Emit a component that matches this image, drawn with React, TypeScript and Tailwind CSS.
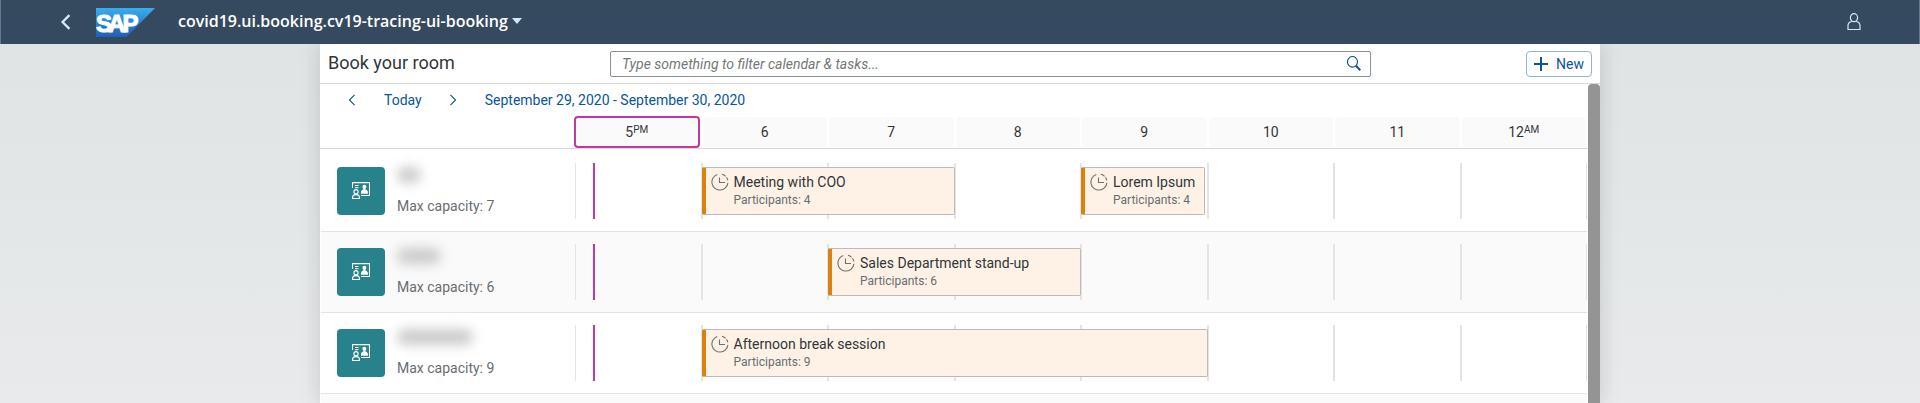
import React from "react";

type Activity = {
  title: string;
  participants: number;
  start: number;
  end: number;
};

type Room = {
  id: string;
  capacity: number;
  nameClass: string;
  activities: Activity[];
};

const HOURS: { label: string; suffix?: string; current?: boolean }[] = [
  { label: "5", suffix: "PM", current: true },
  { label: "6" },
  { label: "7" },
  { label: "8" },
  { label: "9" },
  { label: "10" },
  { label: "11" },
  { label: "12", suffix: "AM" },
];

const NOW = 0.143;

const ROOMS: Room[] = [
  {
    id: "room-1",
    capacity: 7,
    nameClass: "w-6",
    activities: [
      { title: "Meeting with COO", participants: 4, start: 1, end: 3 },
      { title: "Lorem Ipsum", participants: 4, start: 4, end: 4.98 },
    ],
  },
  {
    id: "room-2",
    capacity: 6,
    nameClass: "w-11",
    activities: [
      { title: "Sales Department stand-up", participants: 6, start: 2, end: 4 },
    ],
  },
  {
    id: "room-3",
    capacity: 9,
    nameClass: "w-19",
    activities: [
      { title: "Afternoon break session", participants: 9, start: 1, end: 5 },
    ],
  },
];

function SapLogo() {
  return (
    <svg width="59" height="29" viewBox="0 0 59 29" role="img" aria-label="SAP">
      <defs>
        <linearGradient id="sap-blue" x1="0" y1="0" x2="0" y2="1">
          <stop offset="0" stopColor="#38aeea" />
          <stop offset="0.5" stopColor="#2a86d2" />
          <stop offset="1" stopColor="#1f5fb8" />
        </linearGradient>
      </defs>
      <path d="M0 0H59L30.500 29H0Z" fill="url(#sap-blue)" />
      <text
        x="0 12 26.500"
        y="23.500"
        fill="#fff"
        stroke="#fff"
        strokeWidth="1.100"
        fontFamily="'Liberation Sans', Arial, sans-serif"
        fontWeight="700"
        fontSize="24"
      >
        SAP
      </text>
    </svg>
  );
}

function Chevron({ left, className }: { left?: boolean; className: string }) {
  return (
    <svg viewBox="0 0 8 14" fill="none" stroke="currentColor" className={className} aria-hidden="true">
      <path d={left ? "M7 1L1 7L7 13" : "M1 1L7 7L1 13"} />
    </svg>
  );
}

function RoomIcon() {
  return (
    <svg width="18" height="18" viewBox="0 0 18 18" fill="none" stroke="#fff" aria-hidden="true">
      <path d="M0.500 6V0.600H17.500V13.500H9" strokeWidth="1.100" />
      <path d="M3 3.500H6.500M3 5.700H6.500" />
      <circle cx="4" cy="9.700" r="2.100" strokeWidth="1.100" />
      <path d="M0.600 16.500V15.500C0.600 13.700 1.800 12.600 4 12.600S7.400 13.700 7.400 15.500V16.500Z" strokeWidth="1.100" />
      <g fill="#fff" stroke="none">
        <circle cx="12.400" cy="4.800" r="2" />
        <path d="M9 11.800V10.200C9 8.500 10.100 7.700 11.400 7.400V6H13.400V7.400C14.800 7.700 15.900 8.500 15.900 10.200V11.800Z" />
      </g>
    </svg>
  );
}

function ClockIcon() {
  return (
    <svg width="18" height="18" viewBox="0 0 18 18" fill="none" stroke="#75706a" strokeWidth="1.100" className="shrink-0" aria-hidden="true">
      <path d="M6.300 1.500A8 8 0 1 0 16.900 9.900" />
      <path d="M11 1.300A8 8 0 0 1 14.600 3.400" />
      <path d="M15.500 4.400A8 8 0 0 1 16.800 7.400" />
      <path d="M8.500 4.500V9.500H14" />
    </svg>
  );
}

function ActivityCard({ activity }: { activity: Activity }) {
  const left = `${(activity.start / HOURS.length) * 100}%`;
  const width = `${((activity.end - activity.start) / HOURS.length) * 100}%`;
  return (
    <button
      type="button"
      style={{ left, width }}
      className="absolute inset-y-1 flex items-start gap-[5px] overflow-hidden rounded-xs border border-l-4 border-[#bbb] border-l-[#d98211] bg-[#fef2e6] pt-[5px] pl-[5px] text-left"
    >
      <ClockIcon />
      <span className="flex flex-col whitespace-nowrap">
        <span className="text-sm leading-[18px] text-[#32363a]">{activity.title}</span>
        <span className="text-xs leading-[18px] text-[#6a6d70]">Participants: {activity.participants}</span>
      </span>
    </button>
  );
}

function RoomRow({ room }: { room: Room }) {
  return (
    <li className="flex border-b border-[#e4e4e4] py-3 even:bg-[#fafafa]">
      <div className="flex w-[254px] shrink-0 items-center gap-3 pl-4">
        <span className="flex size-12 items-center justify-center rounded-sm bg-[#27828c]">
          <RoomIcon />
        </span>
        <div className="flex h-12 flex-col justify-between">
          <span className={`h-4 rounded-full bg-[#cbcbcb] blur-[6px] ${room.nameClass}`} />
          <span className="text-sm leading-[18px] text-[#6a6d70]">Max capacity: {room.capacity}</span>
        </div>
      </div>
      <div className="relative grid h-14 flex-1 grid-cols-8">
        {HOURS.map((hour) => (
          <span key={hour.label} className="border-x border-[#e4e4e4]" />
        ))}
        <span
          className="absolute inset-y-0 w-0.5 bg-[#c0399f]"
          style={{ left: `${(NOW / HOURS.length) * 100}%` }}
        />
        {room.activities.map((activity) => (
          <ActivityCard key={activity.title} activity={activity} />
        ))}
      </div>
    </li>
  );
}

export default function App() {
  return (
    <div className="flex h-screen flex-col overflow-hidden bg-linear-to-b from-[#dfe3e4] to-[#e8eaeb] font-['Roboto','Liberation_Sans',sans-serif]">
      <header className="relative z-10 flex h-11 shrink-0 items-center border-x border-[#64768a] bg-[#354a5f] pr-[58px] pl-[59px]">
        <button type="button" aria-label="Back" className="flex w-9 items-center text-[#d1e8ff]">
          <Chevron left className="h-4 w-3 stroke-2" />
        </button>
        <SapLogo />
        <button type="button" className="ml-[23px] flex items-center gap-1 pb-0.5 font-['Open_Sans','Roboto',sans-serif] text-base font-semibold text-white">
          covid19.ui.booking.cv19-tracing-ui-booking
          <svg width="10" height="6" viewBox="0 0 10 6" fill="#d1e8ff" aria-hidden="true">
            <path d="M0 0H10L5 6Z" />
          </svg>
        </button>
        <button type="button" aria-label="User" className="ml-auto text-[#d1e8ff]">
          <svg width="14" height="18" viewBox="0 0 14 18" fill="none" stroke="currentColor" strokeWidth="1.200" aria-hidden="true">
            <ellipse cx="7" cy="4.700" rx="3.600" ry="4" />
            <path d="M4.800 8.500C2.300 9 1 10.400 1 12.500V16.500H13V12.500C13 10.400 11.700 9 9.200 8.500" />
          </svg>
        </button>
      </header>

      <main className="mx-auto flex min-h-0 w-full max-w-[1280px] flex-1 flex-col bg-white shadow-[0_0_20px_rgba(0,0,0,0.15)]">
        <div className="flex h-10 shrink-0 items-center justify-between border-b border-[#d9d9d9] px-2 py-1">
          <h1 className="w-[282px] pb-0.5 text-lg leading-6 text-[#32363a]">Book your room</h1>
          <label className="mr-[60px] flex h-[26px] flex-1 items-center rounded-xs border border-[#89919a] pr-[9px] pl-[11px] text-[#0854a0]">
            <input
              type="search"
              aria-label="Filter calendar and tasks"
              placeholder="Type something to filter calendar & tasks..."
              className="min-w-0 flex-1 bg-transparent text-sm text-[#32363a] outline-none placeholder:text-[#74777a] placeholder:italic"
            />
            <svg width="14" height="15" viewBox="0 0 14 15" fill="none" stroke="currentColor" aria-hidden="true">
              <ellipse cx="5.500" cy="5.800" rx="5" ry="5.300" strokeWidth="1.100" />
              <path d="M9 9.700L13.300 14.200" strokeWidth="2" />
            </svg>
          </label>
          <div className="flex w-[161px] justify-end">
            <button
              type="button"
              className="flex h-[26px] items-center gap-2 rounded-sm border border-[#8fb3d9] px-[7px] text-sm text-[#0854a0]"
            >
              <svg width="14" height="14" viewBox="0 0 14 14" stroke="currentColor" strokeWidth="2" aria-hidden="true">
                <path d="M7 0V14M0 7H14" />
              </svg>
              New
            </button>
          </div>
        </div>

        <div className="flex min-h-0 flex-1">
          <div className="min-w-0 flex-1">
            <div className="flex h-[33px] items-center pb-0.5 pl-7 text-sm text-[#0854a0]">
              <button type="button" aria-label="Previous">
                <Chevron left className="h-3 w-2 stroke-[1.250]" />
              </button>
              <button type="button" className="ml-7">Today</button>
              <button type="button" aria-label="Next" className="ml-[27px]">
                <Chevron className="h-3 w-2 stroke-[1.250]" />
              </button>
              <button type="button" className="ml-7">September 29, 2020 - September 30, 2020</button>
            </div>

            <div className="border-b border-[#d9d9d9] pr-px pb-px pl-[255px]">
              <div className="grid h-[30px] grid-cols-8 text-sm text-[#32363a]">
                {HOURS.map((hour) => (
                  <div
                    key={hour.label}
                    className={
                      hour.current
                        ? "-my-px mr-0.5 -ml-px flex items-center justify-center rounded-sm border-2 border-[#c0399f] bg-[#fafafa]"
                        : "mx-px flex items-center justify-center rounded-sm bg-[#fafafa]"
                    }
                  >
                    {hour.label}
                    {hour.suffix && <span className="pb-1 text-[10px] leading-3">{hour.suffix}</span>}
                  </div>
                ))}
              </div>
            </div>

            <ul className="px-px pt-0.5">
              {ROOMS.map((room) => (
                <RoomRow key={room.id} room={room} />
              ))}
              <li className="h-20 bg-[#fafafa]" />
            </ul>
          </div>
          <div className="w-3 shrink-0 rounded-t-sm bg-[#949494]" />
        </div>
      </main>
    </div>
  );
}
